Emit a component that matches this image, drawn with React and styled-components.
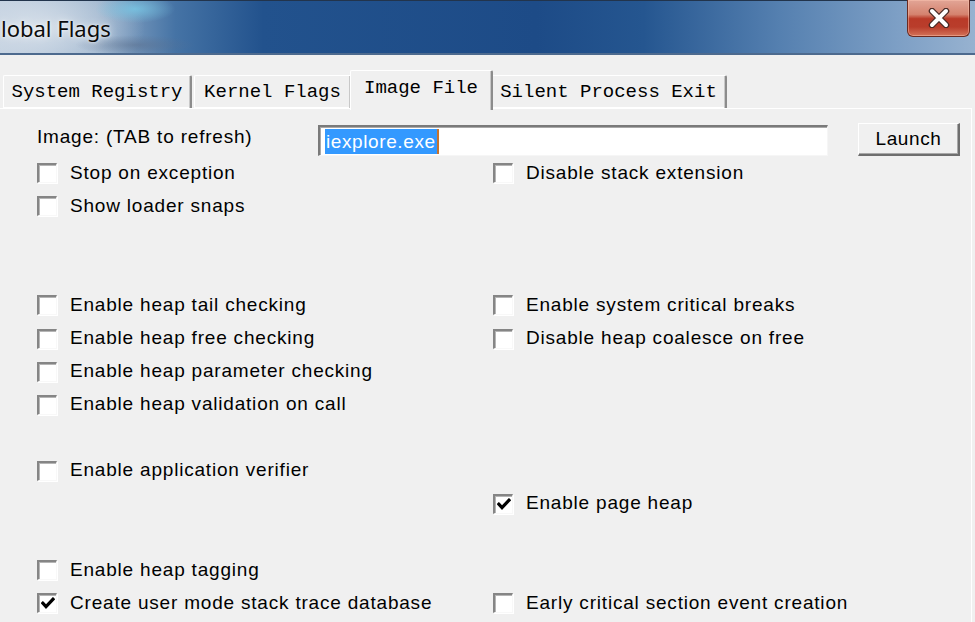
import React from "react";
import styled, { createGlobalStyle } from "styled-components";

const Global = createGlobalStyle`
  html, body { margin: 0; padding: 0; background: #f0f0f0; }
  body { width: 975px; height: 622px; overflow: hidden; font-family: "Liberation Sans", Arial, sans-serif; }
`;

const Window = styled.div`
  width: 975px;
  height: 622px;
  display: flex;
  flex-direction: column;
  overflow: hidden;
  background: #f0f0f0;
`;

const TitleBar = styled.div`
  height: 52px;
  flex: none;
  display: flex;
  justify-content: space-between;
  align-items: flex-start;
  border-top: 1px solid #22344c;
  border-bottom: 2px solid #4d6a8e;
  background:
    radial-gradient(ellipse 40px 14px at 135px 8px, rgba(120, 200, 230, 0.8), rgba(120, 200, 230, 0) 100%),
    radial-gradient(ellipse 60px 10px at 135px 44px, rgba(90, 110, 140, 0.55), rgba(90, 110, 140, 0) 100%),
    radial-gradient(ellipse 110px 60px at 35px 26px, rgba(215, 224, 234, 0.95), rgba(215, 224, 234, 0) 100%),
    linear-gradient(90deg, #b9c9db 0%, #96afca 10%, #4573a5 18%, #22528d 27%, #1d4b87 55%, #255690 66%, #5580b0 80%, #7d9fc5 92%, #97b2d0 100%);
`;

const Title = styled.div`
  font-family: "Noto Sans", "Open Sans", sans-serif;
  font-size: 22px;
  color: #0c0c0c;
  line-height: 54px;
  padding-left: 1px;
  text-shadow: 0 0 8px rgba(255, 255, 255, 0.9), 0 0 3px rgba(255, 255, 255, 0.8);
`;

const CloseButton = styled.div`
  width: 63px;
  height: 37px;
  margin-right: 5px;
  margin-top: -1px;
  display: flex;
  align-items: center;
  justify-content: center;
  box-sizing: border-box;
  border: 1px solid #6b2a20;
  border-top: none;
  border-radius: 0 0 6px 6px;
  box-shadow: inset 0 0 0 1px rgba(255, 200, 180, 0.45);
  background: linear-gradient(180deg, #e2a596 0%, #d5836f 40%, #b93a28 52%, #b93d2b 75%, #d37258 100%);
`;

const Body = styled.div`
  flex: 1;
  display: flex;
  flex-direction: column;
  padding-right: 3px;
`;

const TabStrip = styled.div`
  height: 53px;
  display: flex;
  align-items: flex-end;
  padding-left: 3px;
  position: relative;
  z-index: 1;
`;

const Tab = styled.div`
  box-sizing: border-box;
  width: ${(p) => p.$w}px;
  height: ${(p) => (p.$active ? 40 : 33)}px;
  margin: ${(p) => (p.$active ? "0 -2px -2px -2px" : `0 ${p.$gap || 0}px 0 0`)};
  position: relative;
  z-index: ${(p) => (p.$active ? 2 : 1)};
  display: flex;
  justify-content: center;
  align-items: ${(p) => (p.$active ? "flex-start" : "center")};
  padding-top: ${(p) => (p.$active ? "4px" : "0")};
  background: #f0f0f0;
  border-top: 1px solid #ffffff;
  border-left: 1px solid #ffffff;
  border-right: 2px solid #8c8c8c;
  border-radius: 2px 2px 0 0;
  box-shadow: ${(p) => (p.$active ? "inset -1px 0 0 #c8c8c8" : "inset -1px 0 0 #c8c8c8, inset 0 -1px 0 #ffffff")};
  font-family: "Liberation Mono", "Courier New", monospace;
  font-size: 19px;
  line-height: 26px;
  color: #000;
  white-space: nowrap;
`;

const Page = styled.div`
  flex: 1;
  border-top: 1px solid #ffffff;
  border-right: 1px solid #ffffff;
  padding-left: 37px;
`;

const ImageRow = styled.div`
  display: flex;
  height: 33px;
  margin-top: 14px;
`;

const Label = styled.div`
  width: 281px;
  font-size: 19px;
  letter-spacing: 0.8px;
  line-height: 28px;
  color: #000;
  white-space: nowrap;
`;

const TextInput = styled.div`
  box-sizing: border-box;
  width: 510px;
  height: 31px;
  margin-top: 2px;
  display: flex;
  align-items: center;
  padding-left: 5px;
  background: #ffffff;
  border-top: 2px solid #7a7a7a;
  border-left: 2px solid #7a7a7a;
  border-bottom: 1px solid #f6f6f6;
  border-right: 1px solid #f6f6f6;
  box-shadow: inset 1px 1px 0 #a9a9a9;
`;

const Selection = styled.span`
  background: #3399ff;
  color: #ffffff;
  font-size: 19px;
  letter-spacing: 0.6px;
  line-height: 25px;
  padding: 0 1px 0 1px;
  border-right: 2px solid #c8732e;
`;

const Button = styled.div`
  box-sizing: border-box;
  width: 102px;
  height: 33px;
  margin-left: 30px;
  display: flex;
  align-items: center;
  justify-content: center;
  background: #f0f0f0;
  border-top: 1px solid #ffffff;
  border-left: 1px solid #ffffff;
  border-right: 2px solid #6e6e6e;
  border-bottom: 2px solid #6e6e6e;
  box-shadow: inset -1px -1px 0 #a8a8a8;
  font-size: 19px;
  letter-spacing: 0.6px;
  color: #000;
`;

const Grid = styled.div`
  display: grid;
  grid-template-columns: 456px 1fr;
  grid-template-rows: repeat(14, 33.1px);
`;

const Item = styled.label`
  grid-column: ${(p) => p.$col};
  grid-row: ${(p) => p.$row};
  display: flex;
  align-items: center;
  gap: 13px;
  font-size: 19px;
  letter-spacing: 0.8px;
  color: #000;
  white-space: nowrap;
`;

const Box = styled.span`
  box-sizing: border-box;
  width: 20px;
  height: 20px;
  flex: none;
  margin-top: 1px;
  display: flex;
  align-items: center;
  justify-content: center;
  background: #ffffff;
  border-top: 2px solid #858585;
  border-left: 2px solid #858585;
  border-bottom: 1px solid #f8f8f8;
  border-right: 1px solid #f8f8f8;
  box-shadow: inset 1px 1px 0 #b5b5b5, 1px 1px 0 #ffffff;
`;

const Check = () => (
  <svg width="14" height="13" viewBox="0 0 14 13">
    <path d="M1.8 6.2 L5 9.6 L12 2.2" fill="none" stroke="#000" strokeWidth="3.2" strokeLinecap="square" />
  </svg>
);

const CloseX = () => (
  <svg width="24" height="20" viewBox="0 0 24 20">
    <path d="M5 3 L19 17 M19 3 L5 17" fill="none" stroke="#4a2a25" strokeWidth="6.5" strokeLinecap="round" />
    <path d="M5 3 L19 17 M19 3 L5 17" fill="none" stroke="#ffffff" strokeWidth="4" strokeLinecap="round" />
  </svg>
);

const flags = [
  { col: 1, row: 1, text: "Stop on exception" },
  { col: 2, row: 1, text: "Disable stack extension" },
  { col: 1, row: 2, text: "Show loader snaps" },
  { col: 1, row: 5, text: "Enable heap tail checking" },
  { col: 2, row: 5, text: "Enable system critical breaks" },
  { col: 1, row: 6, text: "Enable heap free checking" },
  { col: 2, row: 6, text: "Disable heap coalesce on free" },
  { col: 1, row: 7, text: "Enable heap parameter checking" },
  { col: 1, row: 8, text: "Enable heap validation on call" },
  { col: 1, row: 10, text: "Enable application verifier" },
  { col: 2, row: 11, text: "Enable page heap", checked: true },
  { col: 1, row: 13, text: "Enable heap tagging" },
  { col: 1, row: 14, text: "Create user mode stack trace database", checked: true },
  { col: 2, row: 14, text: "Early critical section event creation" },
];

export default function App() {
  return (
    <>
      <Global />
      <Window>
        <TitleBar>
          <Title>lobal Flags</Title>
          <CloseButton>
            <CloseX />
          </CloseButton>
        </TitleBar>
        <Body>
          <TabStrip>
            <Tab $w={189} $gap={2}>System Registry</Tab>
            <Tab $w={158}>Kernel Flags</Tab>
            <Tab $w={143} $active>Image File</Tab>
            <Tab $w={236}>Silent Process Exit</Tab>
          </TabStrip>
          <Page>
            <ImageRow>
              <Label>Image: (TAB to refresh)</Label>
              <TextInput>
                <Selection>iexplore.exe</Selection>
              </TextInput>
              <Button>Launch</Button>
            </ImageRow>
            <Grid>
              {flags.map((f) => (
                <Item key={f.text} $col={f.col} $row={f.row}>
                  <Box>{f.checked && <Check />}</Box>
                  {f.text}
                </Item>
              ))}
            </Grid>
          </Page>
        </Body>
      </Window>
    </>
  );
}
